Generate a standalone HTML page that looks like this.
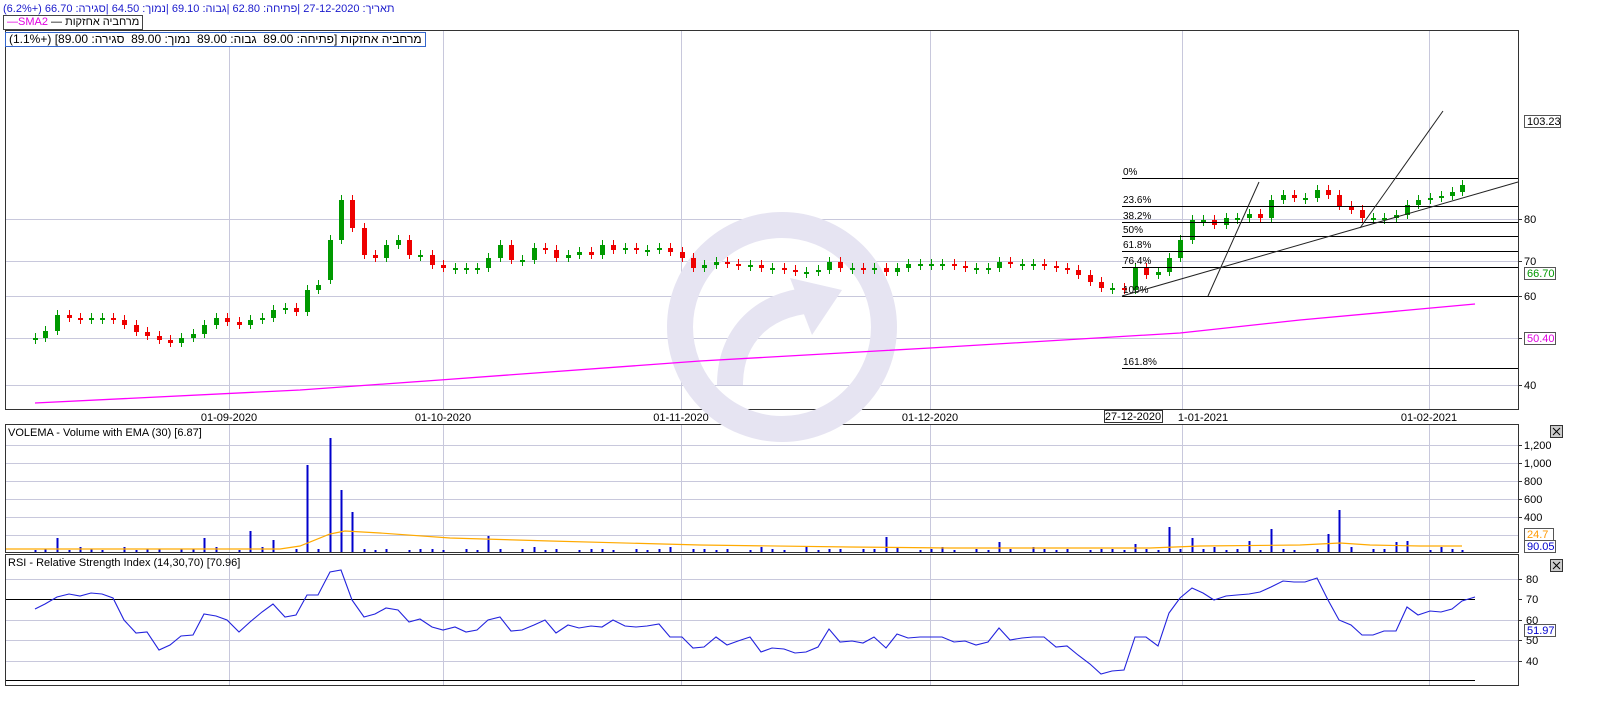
<!DOCTYPE html>
<html style="overflow:hidden;width:1599px;height:702px"><head><meta charset="utf-8">
<style>
html,body{margin:0;padding:0}
body{width:1599px;height:702px;background:#fff;overflow:hidden;font-family:"Liberation Sans",Arial,sans-serif}
#w{position:relative;width:1599px;height:702px;overflow:hidden}
.t{position:absolute;font-size:11px;white-space:nowrap}
</style></head><body><div id="w">
<div class="t" dir="rtl" style="left:3px;top:3px;color:#1a1acc">תאריך: 27-12-2020 |פתיחה: 62.80 |גבוה: 69.10 |נמוך: 64.50 |סגירה: 66.70 (+6.2%)</div>
<svg width="1599" height="702" style="position:absolute;left:0;top:0" id="s" font-family="Liberation Sans, Arial, sans-serif" font-size="11">
</svg>
<div class="t" dir="rtl" style="left:3px;top:15px;height:13px;line-height:13px;border:1px solid #444;padding:0 3px;background:#fff">מרחביה אחזקות <span style="color:#000">—</span> <span style="color:#e000e0">SMA2—</span></div>
<div class="t" dir="rtl" style="left:5px;top:32px;height:13px;line-height:13px;border:1px solid #3366cc;padding:0 3px;background:#fff;font-size:12px">מרחביה אחזקות [פתיחה: 89.00&nbsp; גבוה: 89.00&nbsp; נמוך: 89.00&nbsp; סגירה: 89.00] (+1.1%)</div>
</div>
<script>
(function(){
var s=document.getElementById('s'),h='';
function L(x1,y1,x2,y2,c,w){h+='<line x1="'+x1+'" y1="'+y1+'" x2="'+x2+'" y2="'+y2+'" stroke="'+c+'" stroke-width="'+(w||1)+'"/>';}
function R(x,y,w,hh,f,st){h+='<rect x="'+x+'" y="'+y+'" width="'+w+'" height="'+hh+'" fill="'+f+'"'+(st?' stroke="'+st+'"':'')+'/>';}
function T(x,y,t,c,a,sz){h+='<text x="'+x+'" y="'+y+'" fill="'+(c||'#000')+'"'+(a?' text-anchor="'+a+'"':'')+(sz?' font-size="'+sz+'"':'')+'>'+t+'</text>';}
var G='#c8c8dc';
[[30,409],[424,552],[554,685]].forEach(function(p){R(5.5,p[0]+.5,1513,p[1]-p[0],'#fff','#333');});
var vx=[229,443,681,930,1182,1429];
vx.forEach(function(x){L(x+.5,31,x+.5,409,G);L(x+.5,425,x+.5,552,G);L(x+.5,555,x+.5,685,G);});
[219,261,296,338,385].forEach(function(y){L(6,y+.5,1518,y+.5,G);});
[445,463,481,499,517,535].forEach(function(y){L(6,y+.5,1518,y+.5,G);});
[579,620,640,661].forEach(function(y){L(6,y+.5,1518,y+.5,G);});
h+='<circle cx="782" cy="327" r="102" fill="none" stroke="#e6e4f2" stroke-width="26"/>';
h+='<path d="M730 385 C730 330 770 300 820 300" fill="none" stroke="#e6e4f2" stroke-width="26"/><path d="M790 278 L842 290 L812 335 Z" fill="#e6e4f2"/>';
var ya=[[80,219],[70,261],[60,296],[50,338],[40,385]];
ya.forEach(function(a){L(1518,a[1]+.5,1522,a[1]+.5,'#333');T(1524,a[1]+4,a[0]);});
R(1524.5,115.5,36,12,'#fff','#555');T(1527,125,'103.23');
R(1524.5,267.5,31,12,'#fff','#555');T(1527,277,'66.70','#090');
R(1524.5,332.5,31,12,'#fff','#555');T(1527,342,'50.40','#e000e0');
[['01-09-2020',229],['01-10-2020',443],['01-11-2020',681],['01-12-2020',930],['01-02-2021',1429]].forEach(function(d){T(d[1],421,d[0],'#000','middle');});
R(1104.5,410.5,58,12,'#fff','#333');T(1133,420,'27-12-2020','#000','middle');T(1203,421,'1-01-2021','#000','middle');
h+='<polyline fill="none" stroke="#ff00ff" stroke-width="1.3" points="35,403 300,390 440,380 700,361 930,348 1180,333 1300,320 1475,304"/>';
var c=[35,338,45,331,57,315,69,318,80,320,91,318,102,318,113,320,124,325,136,332,147,336,159,340,170,343,181,338,193,334,204,325,216,318,227,322,239,325,250,320,262,318,273,310,285,308,296,312,307,290,318,285,330,240,341,200,352,228,364,255,375,258,386,245,398,240,409,255,420,255,432,265,443,268,455,268,466,268,477,268,488,258,500,245,511,260,522,260,534,248,545,250,556,258,568,255,579,252,591,255,602,245,613,250,625,248,636,250,647,250,659,248,670,252,682,258,693,268,704,265,716,262,727,264,738,265,750,265,761,268,772,268,784,270,795,272,806,272,818,270,829,262,840,268,852,268,863,270,874,268,886,272,897,268,908,264,920,264,931,264,942,264,954,266,965,268,976,268,988,268,999,262,1010,264,1022,264,1033,264,1044,266,1056,268,1067,270,1078,275,1090,282,1101,288,1112,288,1124,290,1135,268,1146,275,1158,272,1169,258,1180,240,1192,220,1203,220,1214,225,1226,218,1237,218,1249,214,1260,218,1271,200,1283,195,1294,198,1305,198,1317,190,1328,195,1339,206,1351,210,1362,218,1373,218,1384,218,1396,215,1407,205,1418,200,1430,198,1441,196,1452,192,1462,185];
var xs=[];
for(var i=0;i<c.length;i+=2){var x=c[i],y=c[i+1],p=i?c[i-1]:y+2;xs.push(x);
 var up=y<=p,col=up?'#009900':'#ee0000',tp=Math.min(y,p),bh=Math.max(Math.abs(y-p),2);
 if(Math.abs(y-p)>30){tp=up?y:p;bh=Math.min(Math.abs(y-p),40);}
 L(x+.5,tp-5,x+.5,tp+bh+4,col);R(x-2,tp,5,bh,col);}
var fb=[['0%',178],['23.6%',206],['38.2%',222],['50%',236],['61.8%',251],['76.4%',267],['100%',296],['161.8%',368]];
fb.forEach(function(f){L(1122,f[1]+.5,1518,f[1]+.5,'#000');T(1123,f[1]-3,f[0],'#000',null,10);});
L(1122,296,1518,182,'#222');L(1208,296,1259,182,'#222');L(1360,228,1443,111,'#222');
T(8,436,'VOLEMA - Volume with EMA (30) [6.87]');
[['1,200',445],['1,000',463],['800',481],['600',499],['400',517]].forEach(function(a){L(1518,a[1]+.5,1522,a[1]+.5,'#333');T(1524,a[1]+4,a[0]);});
var big={307:465,330:438,341:490,352:512,1169:527,1339:510,1271:529,57:538,204:538,250:531,273:540,488:536,886:537,999:542,1135:544,1192:538,1249:541,1328:534,1396:542,1407:541};
xs.forEach(function(x,k){var t=big[x]||(k%3==0?550:(k%4==0?547:549));if(k%5==2&&!big[x])t=552;L(x+.5,t,x+.5,552,'#0000cc',2);});
h+='<polyline fill="none" stroke="#ffaa00" stroke-width="1.2" points="6,549 280,549 300,546 330,534 345,531 380,533 450,538 550,541 700,545 850,547 950,548 1150,548 1200,546 1300,545 1340,543 1370,545 1420,546 1462,546"/>';
R(1524.5,528.5,29,12,'#fff','#555');T(1527,538,'24.7','#ff9900');
R(1524.5,540.5,31,12,'#fff','#555');T(1527,550,'90.05','#0000cc');
T(8,566,'RSI - Relative Strength Index (14,30,70) [70.96]');
[[80,579],[70,599],[60,620],[50,640],[40,661]].forEach(function(a){L(1518,a[1]+.5,1522,a[1]+.5,'#333');T(1526,a[1]+4,a[0]);});
L(6,599.5,1475,599.5,'#000');L(6,680.5,1475,680.5,'#000');
h+='<polyline fill="none" stroke="#2222dd" stroke-width="1.1" points="35,609 45,604 57,597 69,594 80,596 91,593 102,594 113,598 124,620 136,633 147,632 159,650 170,645 181,636 193,635 204,614 216,616 227,620 239,632 250,622 262,612 273,604 285,617 296,615 307,595 318,595 330,572 341,570 352,600 364,617 375,614 386,608 398,610 409,622 420,619 432,627 443,630 455,627 466,632 477,630 488,620 500,617 511,631 522,630 534,625 545,620 556,633 568,625 579,628 591,626 602,627 613,620 625,626 636,627 647,626 659,624 670,637 682,637 693,648 704,647 716,637 727,645 738,641 750,637 761,652 772,648 784,649 795,653 806,652 818,647 829,629 840,642 852,641 863,643 874,637 886,648 897,634 908,638 920,637 931,637 942,637 954,642 965,641 976,645 988,642 999,628 1010,640 1022,638 1033,637 1044,637 1056,647 1067,646 1078,655 1090,664 1101,674 1112,671 1124,670 1135,637 1146,637 1158,646 1169,613 1180,598 1192,588 1203,593 1214,600 1226,596 1237,595 1249,594 1260,592 1271,587 1283,581 1294,582 1305,582 1317,578 1328,600 1339,620 1351,625 1362,635 1373,635 1384,631 1396,631 1407,607 1418,615 1430,611 1441,612 1452,609 1462,601 1475,597"/>';
R(1524.5,624.5,31,12,'#fff','#555');T(1527,634,'51.97','#0000cc');
[425,559].forEach(function(y){R(1550.5,y+.5,12,12,'#ccc','#333');L(1553,y+3,1560,y+10,'#000');L(1560,y+3,1553,y+10,'#000');});
s.innerHTML=h;
})();
</script>
</body></html>
